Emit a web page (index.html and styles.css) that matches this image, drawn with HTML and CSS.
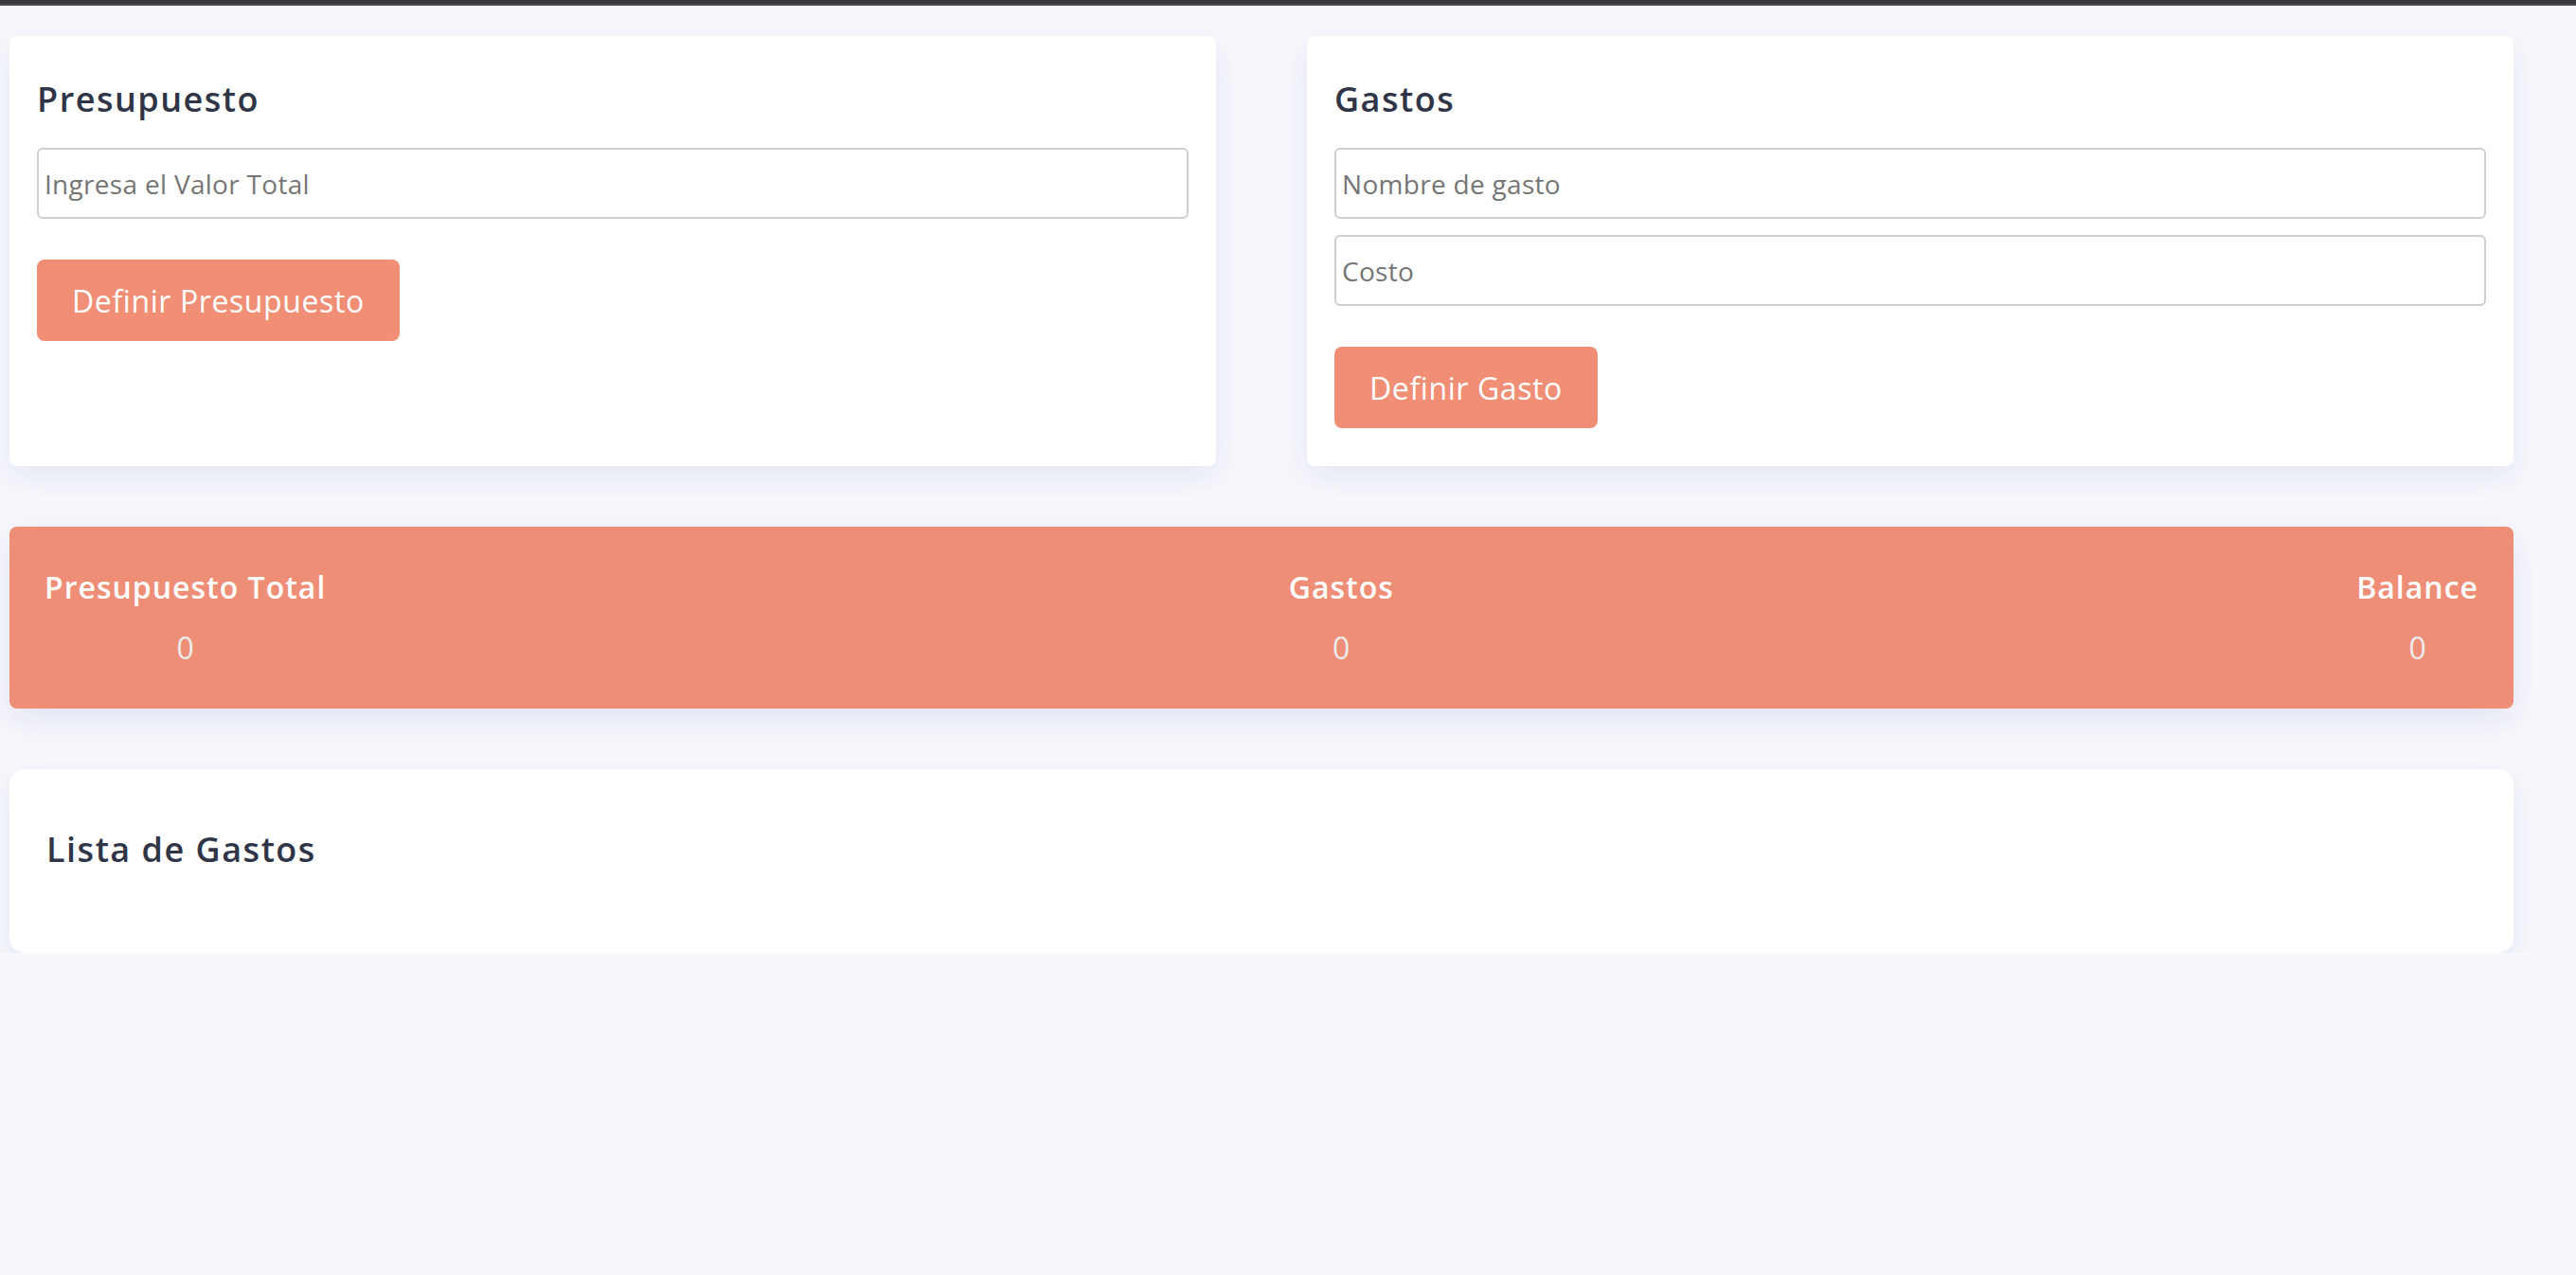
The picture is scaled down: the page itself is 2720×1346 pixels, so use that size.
FILE: index.html
```html
<!DOCTYPE html>
<html lang="es">
<head>
<meta charset="utf-8">
<title>Presupuesto</title>
<link rel="stylesheet" href="styles.css">
</head>
<body>
<div class="topbar"></div>
<main class="page">
  <section class="forms">
    <div class="card">
      <h2 class="card-title">Presupuesto</h2>
      <input class="field" type="text" placeholder="Ingresa el Valor Total">
      <button class="btn">Definir Presupuesto</button>
    </div>
    <div class="card">
      <h2 class="card-title">Gastos</h2>
      <input class="field" type="text" placeholder="Nombre de gasto">
      <input class="field field-next" type="text" placeholder="Costo">
      <button class="btn">Definir Gasto</button>
    </div>
  </section>
  <section class="summary">
    <div class="stat"><span class="stat-label">Presupuesto Total</span><span class="stat-value">0</span></div>
    <div class="stat"><span class="stat-label">Gastos</span><span class="stat-value">0</span></div>
    <div class="stat"><span class="stat-label">Balance</span><span class="stat-value">0</span></div>
  </section>
  <section class="list-card">
    <h2 class="card-title">Lista de Gastos</h2>
  </section>
</main>
</body>
</html>
```
FILE: styles.css
```css
* { box-sizing: border-box; }
html, body { margin: 0; padding: 0; }
body {
  background: #f7f8fc;
  font-family: "Open Sans", "DejaVu Sans", sans-serif;
  color: #2f3547;
}
.topbar {
  height: 6px;
  background: #36373c;
  border-bottom: 2px solid #4b4c51;
}
.page {
  width: 2654px;
  padding-left: 10px;
  padding-top: 32px;
}
.forms {
  display: grid;
  grid-template-columns: 1fr 1fr;
  column-gap: 96px;
}
.card {
  background: #fff;
  border-radius: 8px;
  box-shadow: 0 12px 32px rgba(205, 210, 235, 0.45);
  padding: 40px 29px 40px 29px;
  display: flex;
  flex-direction: column;
  align-items: flex-start;
}
.card-title {
  margin: 0;
  font-size: 36px;
  font-weight: 600;
  letter-spacing: 1.5px;
  line-height: 54px;
  color: #2f3547;
}
.field {
  width: 100%;
  height: 75px;
  margin-top: 24px;
  border: 2px solid #cfcfcf;
  border-radius: 6px;
  padding: 0 6px;
  font-family: inherit;
  font-size: 28px;
  letter-spacing: 0.3px;
  color: #333;
  background: #fff;
}
.field::placeholder { color: #757575; }
.field-next { margin-top: 17px; }
.btn {
  margin-top: 43px;
  height: 86px;
  padding: 0 37px;
  border: none;
  border-radius: 8px;
  background: #f08f76;
  color: #fff;
  font-family: inherit;
  font-size: 32px;
  letter-spacing: 0.6px;
  font-weight: 400;
}
.summary {
  margin-top: 64px;
  height: 192px;
  background: #ef8e76;
  border-radius: 8px;
  box-shadow: 0 12px 32px rgba(205, 210, 235, 0.5);
  padding: 40px 37px;
  display: flex;
  justify-content: space-between;
}
.stat {
  display: flex;
  flex-direction: column;
  align-items: center;
  gap: 16px;
}
.stat-label {
  font-size: 32px;
  font-weight: 600;
  letter-spacing: 1px;
  line-height: 48px;
  color: #fff;
}
.stat-value {
  font-size: 32px;
  font-weight: 400;
  line-height: 48px;
  color: #ebebeb;
}
.list-card {
  margin-top: 64px;
  height: 194px;
  background: #fff;
  border-radius: 16px;
  box-shadow: 0 12px 32px rgba(205, 210, 235, 0.45);
  padding: 58px 39px 0;
}
```
